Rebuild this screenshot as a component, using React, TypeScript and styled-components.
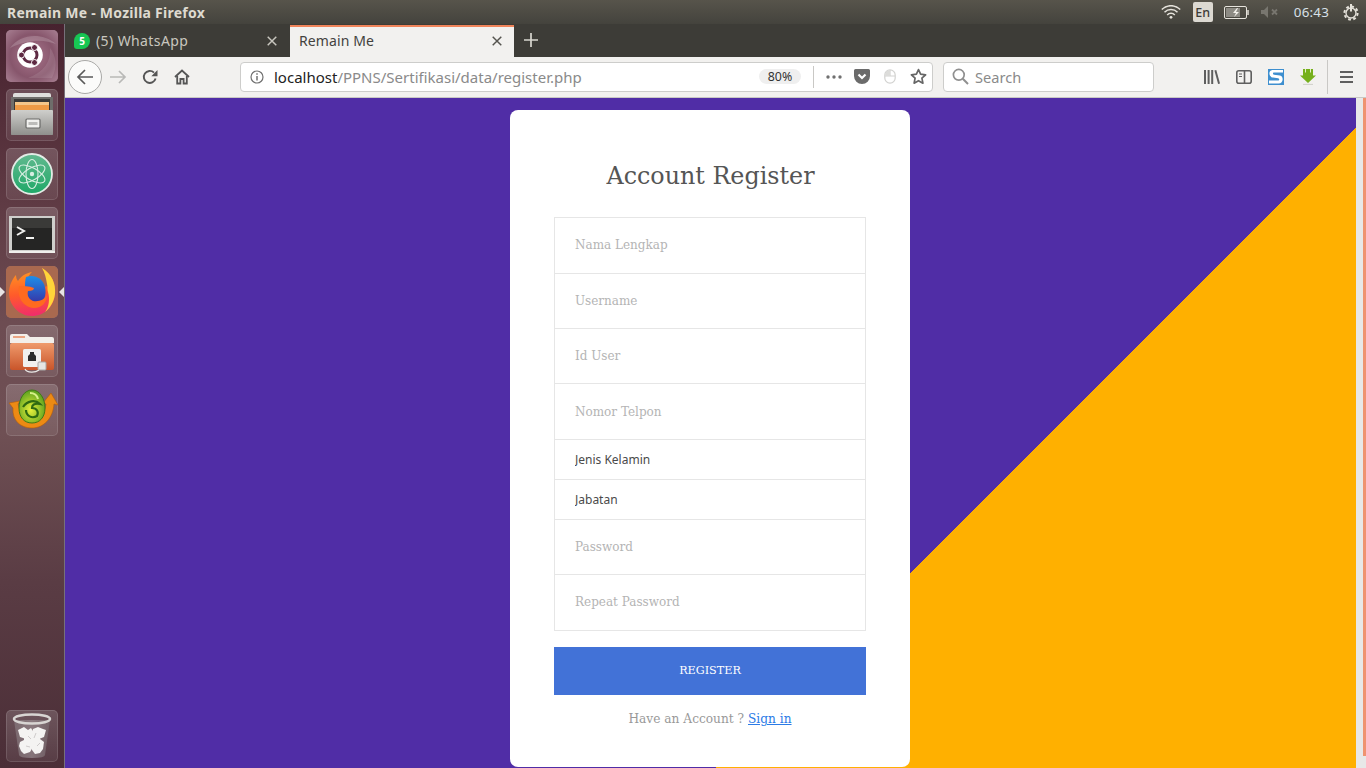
import React from "react";
import styled, { createGlobalStyle } from "styled-components";

const Global = createGlobalStyle`
  html, body { margin: 0; padding: 0; height: 100%; overflow: hidden; }
  * { box-sizing: border-box; }
`;

const UI = `"Noto Sans", "Open Sans", sans-serif`;
const SERIF = `"DejaVu Serif", serif`;

const Screen = styled.div`
  width: 1366px; height: 768px; display: flex; flex-direction: column; overflow: hidden; font-family: ${UI};
`;
const TopBar = styled.header`
  height: 24px; flex: none; display: flex; align-items: center; padding: 0 6px 0 7px;
  background: linear-gradient(#57544b, #44433d);
`;
const WinTitle = styled.div`
  flex: 1; font-size: 14px; font-weight: 700; color: #dedad0; white-space: nowrap; letter-spacing: .25px;
`;
const Tray = styled.div`display: flex; align-items: center;`;
const LangBadge = styled.div`
  width: 20px; height: 20px; margin: 0 11px 0 12px; border-radius: 2px; background: #dcd9d2; color: #3c3b37;
  font-size: 12.5px; font-weight: 500; display: flex; align-items: center; justify-content: center;
`;
const MuteSlot = styled.div`margin-left: 12px; display: flex;`;
const Clock = styled.div`
  margin: 0 13px 0 15px; font-size: 13.4px; color: #d8e0e8; letter-spacing: .2px;
`;
const Desktop = styled.div`flex: 1; min-height: 0; display: flex;`;
const Launcher = styled.nav`
  width: 65px; flex: none; display: flex; flex-direction: column; gap: 7px; padding: 6px;
  border-right: 1px solid #77707a;
  background: linear-gradient(#47222f 0%, #5b3640 20%, #6d4c52 40%, #6f5054 55%, #5a3c44 75%, #4b2e37 100%);
`;
const Tile = styled.div<{ $end?: boolean }>`
  position: relative; width: 52px; height: 52px; flex: none; border-radius: 5px;
  background: linear-gradient(rgba(255,255,255,.17), rgba(255,255,255,.07));
  box-shadow: inset 0 0 0 1px rgba(255,255,255,.13);
  margin-top: ${(p) => (p.$end ? "auto" : "0")};
  svg { display: block; }
`;
const PipLeft = styled.span`
  position: absolute; left: -6px; top: 21px; width: 0; height: 0;
  border: 5px solid transparent; border-left: 5px solid #e8e4e4; border-right: 0;
`;
const PipRight = styled.span`
  position: absolute; right: -6px; top: 21px; width: 0; height: 0;
  border: 5px solid transparent; border-right: 5px solid #e8e4e4; border-left: 0;
`;
const Browser = styled.main`flex: 1; min-width: 0; display: flex; flex-direction: column;`;
const TabStrip = styled.div`height: 33px; flex: none; display: flex; background: #3d3c37;`;
const Tab = styled.div<{ $active?: boolean; $w: number; $pr: number }>`
  width: ${(p) => p.$w}px; display: flex; align-items: center; padding: 0 ${(p) => p.$pr}px 3px 9px; gap: 6px;
  font-size: 14px; margin-top: 1px;
  color: ${(p) => (p.$active ? "#43423e" : "#c9c7bf")};
  background: ${(p) => (p.$active ? "#f2f1ef" : "transparent")};
  border-top: 2px solid ${(p) => (p.$active ? "#f0845a" : "transparent")};
`;
const TabLabel = styled.span<{ $spread?: number }>`
  flex: 1; white-space: nowrap; letter-spacing: ${(p) => p.$spread ?? 0}px;
`;
const Bubble = styled.span`
  width: 16px; height: 16px; flex: none; border-radius: 50% 50% 50% 3px; background: #17c653; color: #fff;
  font-size: 10px; font-weight: 700; display: flex; align-items: center; justify-content: center;
`;
const NewTab = styled.div`width: 34px; display: flex; align-items: center; justify-content: center; padding-bottom: 2px;`;
const Toolbar = styled.div`
  height: 41px; flex: none; display: flex; align-items: center; padding-left: 3px; padding-bottom: 1px;
  background: #f2f1ef; border-bottom: 1px solid #c9c8c5;
`;
const BackBtn = styled.div`
  width: 34px; height: 34px; flex: none; border-radius: 50%; border: 1px solid #a9a9a7; background: #fbfbfa;
  display: flex; align-items: center; justify-content: center;
`;
const ToolBtn = styled.div`
  width: 32px; height: 32px; flex: none; display: flex; align-items: center; justify-content: center;
`;
const UrlBar = styled.div`
  width: 693px; height: 30px; margin-left: 42px; flex: none; display: flex; align-items: center; padding-left: 9px;
  background: #fff; border: 1px solid #cdcdcb; border-radius: 4px;
`;
const UrlText = styled.div`
  flex: 1; margin-left: 10px; font-size: 15px; white-space: nowrap; color: #8a8a8a;
  b { font-weight: 400; color: #222; }
`;
const ZoomPill = styled.div`
  width: 42px; height: 15px; border-radius: 8px; background: #efefef; color: #333; font-size: 12.4px;
  display: flex; align-items: center; justify-content: center;
`;
const VSep = styled.div<{ $h: number; $mx: string }>`
  width: 1px; height: ${(p) => p.$h}px; margin: ${(p) => p.$mx}; flex: none; background: #c9c8c5;
`;
const UrlIcon = styled.div`
  width: 28px; height: 28px; flex: none; display: flex; align-items: center; justify-content: center;
`;
const SearchBar = styled.div`
  width: 211px; height: 30px; margin: 0 42px 0 10px; flex: none; display: flex; align-items: center; gap: 6px; padding-left: 8px;
  background: #fff; border: 1px solid #cdcdcb; border-radius: 4px; color: #8a8a8a; font-size: 14.6px;
`;
const Viewport = styled.div`flex: 1; min-height: 0; display: flex;`;
const Page = styled.div`
  flex: 1; min-width: 0; padding: 12px 0 0 445px; overflow: hidden;
  background: linear-gradient(135deg, #502da6 934px, #ffb000 934px);
`;
const ScrollTrack = styled.div`width: 10px; flex: none; background: #e8e8e8; display: flex; justify-content: flex-end;`;
const ScrollThumb = styled.div`width: 3px; height: 658px; background: #ef9370;`;
const Card = styled.form`
  width: 400px; height: 657px; background: #fff; border-radius: 8px; padding: 0 44px; font-family: ${SERIF};
`;
const Heading = styled.h1`
  margin: 0; height: 107px; padding: 48px 0 0 1px; text-align: center; font-size: 23.8px; line-height: 36px; font-weight: 400; color: #555;
`;
const Fields = styled.div`border: 1px solid #e6e6e6; border-top: 0; margin-bottom: 16px;`;
const FieldRow = styled.div<{ $h: number }>`
  height: ${(p) => p.$h}px; border-top: 1px solid #e6e6e6; display: flex;
`;
const TextField = styled.input<{ $lift?: number }>`
  flex: 1; min-width: 0; border: 0; outline: 0; background: transparent; padding: 0 20px ${(p) => p.$lift ?? 0}px; margin: 0;
  font: 400 12px ${SERIF}; color: #444;
  &::placeholder { color: #b4b4b4; opacity: 1; }
`;
const SelectField = styled.select`
  flex: 1; min-width: 0; border: 0; outline: 0; background: transparent; padding: 0 20px; margin: 0;
  appearance: none; font: 400 12px ${UI}; color: #4a4a4a;
`;
const Submit = styled.button`
  display: block; width: 100%; height: 48px; border: 0; padding: 0 0 2px; background: #4272d7; color: #fff;
  font: 400 11.2px ${SERIF};
`;
const Foot = styled.p`
  margin: 16px 0 0; text-align: center; font-size: 12.2px; line-height: 16px; color: #999;
  a { color: #2b7be6; text-decoration: underline; }
`;

const Tx = ({ size = 14, c = "#c9c7bf" }: { size?: number; c?: string }) => (
  <svg width={size} height={size} viewBox="0 0 14 14" fill="none" stroke={c} strokeWidth="1.7">
    <path d="M2 2l10 10M12 2L2 12" />
  </svg>
);

const UbuntuIcon = () => (
  <svg width="52" height="52" viewBox="0 0 52 52">
    <defs>
      <radialGradient id="ub" cx=".5" cy=".5" r=".7">
        <stop offset="0" stopColor="#a9758c" />
        <stop offset=".6" stopColor="#87566c" />
        <stop offset="1" stopColor="#a87f92" />
      </radialGradient>
    </defs>
    <rect width="52" height="52" rx="5" fill="url(#ub)" />
    <path d="M4 18C14 4 36 2 50 14c-12-5-28-5-46 4z" fill="#fff" opacity=".18" />
    <path d="M46 48C52 36 50 26 44 18c1 14-6 24-22 30z" fill="#fff" opacity=".1" />
    <circle cx="24" cy="25" r="12.8" fill="#fff" />
    <circle cx="24" cy="25" r="7" fill="none" stroke="#5e2a43" strokeWidth="3" />
    <circle cx="15.5" cy="25" r="3" fill="#5e2a43" stroke="#fff" strokeWidth="1" />
    <circle cx="28.5" cy="17.5" r="3" fill="#5e2a43" stroke="#fff" strokeWidth="1" />
    <circle cx="28.5" cy="32.5" r="3" fill="#5e2a43" stroke="#fff" strokeWidth="1" />
  </svg>
);
const FilesIcon = () => (
  <svg width="52" height="52" viewBox="0 0 52 52">
    <defs>
      <linearGradient id="cab" x1="0" y1="0" x2="0" y2="1">
        <stop offset="0" stopColor="#cfcfcc" />
        <stop offset="1" stopColor="#8f8f8c" />
      </linearGradient>
    </defs>
    <path d="M7 6q0-2 2-2h34q2 0 2 2v2H7z" fill="#dededc" />
    <rect x="5" y="8" width="42" height="38" fill="#6e6d6a" />
    <rect x="8" y="10" width="36" height="13" fill="#3a3937" />
    <rect x="9" y="13" width="34" height="3" fill="#f4c68a" />
    <rect x="9" y="16" width="34" height="7" fill="#ee9a45" />
    <rect x="5" y="21" width="42" height="25" rx="1" fill="url(#cab)" />
    <rect x="20" y="30" width="14" height="9" rx="1" fill="#f1f1ef" stroke="#6a6a68" strokeWidth="1.2" />
    <rect x="22.5" y="33" width="9" height="3" fill="#bcbcba" />
  </svg>
);
const AtomIcon = () => (
  <svg width="52" height="52" viewBox="0 0 52 52">
    <defs>
      <linearGradient id="at" x1="0" y1="0" x2="0" y2="1">
        <stop offset="0" stopColor="#62b98f" />
        <stop offset="1" stopColor="#1fa868" />
      </linearGradient>
    </defs>
    <circle cx="26" cy="26" r="20" fill="url(#at)" stroke="#e3ece6" strokeWidth="1.8" />
    <g fill="none" stroke="#d8eee2" strokeWidth="1.1">
      <ellipse cx="26" cy="26" rx="14.5" ry="6" transform="rotate(30 26 26)" />
      <ellipse cx="26" cy="26" rx="14.5" ry="6" transform="rotate(90 26 26)" />
      <ellipse cx="26" cy="26" rx="14.5" ry="6" transform="rotate(150 26 26)" />
    </g>
    <circle cx="26" cy="26" r="2.2" fill="#d8eee2" />
  </svg>
);
const TermIcon = () => (
  <svg width="52" height="52" viewBox="0 0 52 52">
    <rect x="3" y="9" width="46" height="37" fill="#cfcfcc" />
    <rect x="3" y="44" width="46" height="2" fill="#efefec" />
    <rect x="6" y="11" width="40" height="32" fill="#252524" />
    <rect x="6" y="11" width="40" height="10" fill="#3a3a38" />
    <path d="M11 20l7 4-7 4" fill="none" stroke="#f2f2f0" strokeWidth="2" />
    <path d="M20 31h8" stroke="#f2f2f0" strokeWidth="2" />
  </svg>
);
const FirefoxIcon = () => (
  <svg width="52" height="52" viewBox="0 0 52 52">
    <defs>
      <linearGradient id="ff" x1=".3" y1="0" x2=".4" y2="1">
        <stop offset="0" stopColor="#ff9a1f" />
        <stop offset=".55" stopColor="#ff5a2b" />
        <stop offset="1" stopColor="#ef2d6b" />
      </linearGradient>
      <linearGradient id="gl" x1=".5" y1="0" x2=".5" y2="1">
        <stop offset="0" stopColor="#1c8fea" />
        <stop offset="1" stopColor="#3a2a9f" />
      </linearGradient>
    </defs>
    <rect width="52" height="52" rx="5" fill="#a9694f" />
    <path d="M36 2c10 6 14 16 13 26-1 13-11 22-23 22C13 50 3 39 3 27 3 19 7 12 10 9c0 3 1 5 2 6 3-5 8-8 14-9-3 3-4 5-4 7 6-1 12 2 14 6 1 2 4 2 5 1 1-7-1-13-5-18z" fill="url(#ff)" />
    <path d="M36 2c10 6 14 16 13 26-1 8-5 14-10 18 4-5 5-13 3-20-1-4 0-5-1-8-1-6-2-11-5-16z" fill="#ffd53a" />
    <path d="M20 11c8-3 17 1 19 10 2 8-1 17-10 19-6-4-10-12-10-18 0-4 0-8 1-11z" fill="url(#gl)" />
    <path d="M13 20c-2 10 3 21 15 22 8 0 13-6 13-13-3 5-8 7-14 6-5-2-6-7-5-10 4 0 6-1 6-3-5-2-11-2-15-2z" fill="#ff6a1f" />
  </svg>
);
const FolderIcon = () => (
  <svg width="52" height="52" viewBox="0 0 52 52">
    <defs>
      <linearGradient id="fo" x1="0" y1="0" x2="0" y2="1">
        <stop offset="0" stopColor="#ef9a6c" />
        <stop offset="1" stopColor="#c9552a" />
      </linearGradient>
    </defs>
    <path d="M4 11q0-2 2-2h15l3 3h22q2 0 2 2v4H4z" fill="#f3efea" />
    <rect x="7" y="11" width="12" height="2" fill="#eba583" />
    <rect x="4" y="18" width="44" height="27" rx="2" fill="url(#fo)" />
    <rect x="17" y="24" width="18" height="18" rx="1.5" fill="#f1f0ee" />
    <path d="M22 36v-5l2-2v-2h4v2l2 2v5z" fill="#2b2b2b" />
    <rect x="32" y="37" width="8" height="8" rx="1" fill="#e6e6e4" stroke="#a9a9a7" />
    <path d="M33 45c-4 3-12 3-14-1" fill="none" stroke="#e8e8e6" strokeWidth="1.2" />
  </svg>
);
const BackupIcon = () => (
  <svg width="52" height="52" viewBox="0 0 52 52">
    <defs>
      <radialGradient id="egg" cx=".45" cy=".6" r=".65">
        <stop offset="0" stopColor="#e8f03c" />
        <stop offset="1" stopColor="#4f9a1c" />
      </radialGradient>
    </defs>
    <path d="M3 19l11-2-2 3c2 10 8 15 14 15s13-5 14-15l-3-1 8-10 7 12-4-1c-1 14-10 24-22 24S6 36 7 24z" fill="#ec8a14" stroke="#b45d0a" strokeWidth=".6" />
    <path d="M26 6c8 0 13 9 13 18s-5 15-13 15-13-6-13-15S18 6 26 6z" fill="url(#egg)" stroke="#3f7a16" />
    <path d="M17 23c4-6 12-8 17-3-6-1-8 1-8 4 5 0 7 4 5 8-5 3-11 0-11-6" fill="none" stroke="#2f6a12" strokeWidth="2.2" />
    <path d="M24 9c4 0 7 2 8 6" fill="none" stroke="#d7f08a" strokeWidth="2" />
  </svg>
);
const TrashIcon = () => (
  <svg width="52" height="52" viewBox="0 0 52 52">
    <defs>
      <linearGradient id="bin" x1="0" y1="0" x2="1" y2="0">
        <stop offset="0" stopColor="#8d8286" />
        <stop offset=".5" stopColor="#a89ea2" />
        <stop offset="1" stopColor="#7d7276" />
      </linearGradient>
    </defs>
    <path d="M8 10l5 35q0 3 13 3t13-3l5-35z" fill="url(#bin)" opacity=".55" />
    <ellipse cx="26" cy="9" rx="18" ry="4.5" fill="none" stroke="#d8d5d3" strokeWidth="2.5" />
    <g fill="#f4f3f2">
      <path d="M12 20l6-3 4 3 3-2 3 5-2 5-6 1-6-2z" />
      <path d="M27 19l5-2 5 2 3 1-2 7-5 2-5-2-2-4z" />
      <path d="M14 32l6-3 5 3 2 5-3 5-6 2-3-3-2-5z" />
      <path d="M28 31l6-2 4 3-1 7-3 4-5 1-3-4 0-5z" />
      <rect x="18" y="24" width="16" height="12" />
    </g>
    <path d="M22 26l3 3M30 23l-2 5M20 36l4 1M31 36l3-3" stroke="#c4c0c0" fill="none" strokeWidth=".8" />
  </svg>
);

const I = {
  back: (
    <svg width="20" height="20" viewBox="0 0 20 20" fill="none" stroke="#5a5a5a" strokeWidth="1.7"><path d="M18 10H3M10 3l-7 7 7 7" /></svg>
  ),
  fwd: (
    <svg width="18" height="18" viewBox="0 0 18 18" fill="none" stroke="#b9b9b7" strokeWidth="1.7"><path d="M1 9h15M10 3l6 6-6 6" /></svg>
  ),
  reload: (
    <svg width="16" height="16" viewBox="0 0 16 16" fill="none"><path d="M13.6 9.5A6 6 0 1 1 12 3.6" stroke="#555" strokeWidth="1.9" /><path d="M15.5 1v6.2H9.3z" fill="#555" /></svg>
  ),
  home: (
    <svg width="16" height="16" viewBox="0 0 16 16" fill="none" stroke="#555" strokeWidth="1.8"><path d="M1 8l7-6.5L15 8" /><path d="M3.2 7v7.5h3.2V10h3.2v4.5h3.2V7" /></svg>
  ),
  info: (
    <svg width="14" height="14" viewBox="0 0 14 14" fill="none" stroke="#707070" strokeWidth="1.2"><circle cx="7" cy="7" r="6" /><path d="M7 6v4.5" strokeWidth="1.5" /><path d="M7 3.2v1.5" strokeWidth="1.5" /></svg>
  ),
  dots: (
    <svg width="16" height="4" viewBox="0 0 16 4" fill="#707070"><circle cx="2" cy="2" r="1.7" /><circle cx="8" cy="2" r="1.7" /><circle cx="14" cy="2" r="1.7" /></svg>
  ),
  pocket: (
    <svg width="16" height="15" viewBox="0 0 16 15"><path d="M1.5 0h13A1.5 1.5 0 0 1 16 1.5V7a8 8 0 0 1-16 0V1.5A1.5 1.5 0 0 1 1.5 0z" fill="#6b6b6b" /><path d="M4.5 5.5L8 9l3.5-3.5" fill="none" stroke="#fff" strokeWidth="2.2" /></svg>
  ),
  mouse: (
    <svg width="12" height="15" viewBox="0 0 12 15" fill="none" stroke="#d2d2d0" strokeWidth="1.2"><rect x=".8" y=".8" width="10.4" height="13.4" rx="5.2" /><path d="M6 1v6M1 7h10" /><path d="M6 1a5 5 0 0 0-5 5v1h5z" fill="#dcdcda" stroke="none" /></svg>
  ),
  star: (
    <svg width="17" height="17" viewBox="0 0 17 17" fill="none" stroke="#666" strokeWidth="1.7" strokeLinejoin="round"><path d="M8.5 1.6l2.1 4.6 5 .6-3.7 3.4 1 5-4.4-2.5-4.4 2.5 1-5L1.4 6.8l5-.6z" /></svg>
  ),
  search: (
    <svg width="17" height="17" viewBox="0 0 17 17" fill="none" stroke="#8f8f8f" strokeWidth="1.7"><circle cx="6.8" cy="6.8" r="5.4" /><path d="M10.8 10.8l5.2 5.2" strokeWidth="2" /></svg>
  ),
  library: (
    <svg width="16" height="15" viewBox="0 0 16 15" fill="#5f5f5f"><rect x="0" y="1" width="2" height="14" /><rect x="3.6" y="1" width="2" height="14" /><rect x="7.2" y="1" width="2" height="14" /><path d="M10.4 1.6l1.9-.6 3.7 13.4-1.9.6z" /></svg>
  ),
  sidebar: (
    <svg width="16" height="14" viewBox="0 0 16 14" fill="none" stroke="#5f5f5f" strokeWidth="1.6"><rect x=".8" y=".8" width="14.4" height="12.4" rx="2" /><path d="M8.5 1v12" /><path d="M3 4h3M3 6.5h3" strokeWidth="1.1" /></svg>
  ),
  s: (
    <svg width="16" height="16" viewBox="0 0 16 16"><rect width="16" height="16" fill="#3e8fcf" /><path d="M1 1h14v2.5H6c-1.4 0-1.4 2 0 2.2l6 .9c4 .7 3.5 8-1.5 8H1v-3h9c1.6 0 1.6-2 .2-2.3L5 8.6C0 7.6.4 1 5 1z" fill="#fff" /></svg>
  ),
  download: (
    <svg width="16" height="16" viewBox="0 0 16 16"><path d="M3 0h10v6.5h3L8 14 0 6.500h3z" fill="#76b01c" /><path d="M5.500 0v3.500M10.500 0v3.500" stroke="#e4efc8" strokeWidth="1" /><path d="M3 15.400h10" stroke="#cfcfc9" strokeWidth="1" /></svg>
  ),
  burger: (
    <svg width="14" height="12" viewBox="0 0 14 12" fill="#5f5f5f"><rect width="13" height="2" /><rect y="5" width="13" height="2" /><rect y="10" width="13" height="2" /></svg>
  ),
  plus: (
    <svg width="14" height="14" viewBox="0 0 14 14" stroke="#d8d6cf" strokeWidth="1.7"><path d="M7 0v14M0 7h14" /></svg>
  ),
  wifi: (
    <svg width="20" height="14" viewBox="0 0 20 14" fill="none" stroke="#e6e3dc" strokeWidth="1.5"><path d="M.8 4.5a13 13 0 0 1 18.400 0M3.500 7.300a9.200 9.200 0 0 1 13 0M6.200 10a5.200 5.200 0 0 1 7.600 0" /><circle cx="10" cy="12.300" r="1.400" fill="#e6e3dc" stroke="none" /></svg>
  ),
  battery: (
    <svg width="25" height="13" viewBox="0 0 25 13"><rect x=".5" y=".5" width="22" height="12" rx="1.500" fill="none" stroke="#e6e3dc" /><rect x="2" y="2" width="14" height="9" fill="#8d8b84" /><rect x="23" y="4" width="2" height="5" fill="#bdbab2" /><path d="M13 2l-4 5h3l-2 4 5-5h-3l2-4z" fill="#f2f0ea" /></svg>
  ),
  mute: (
    <svg width="18" height="12" viewBox="0 0 18 12"><path d="M0 4h3l4-4v12L3 8H0z" fill="#78766f" /><path d="M11 3.500l5 5M16 3.500l-5 5" stroke="#78766f" strokeWidth="1.800" /></svg>
  ),
  power: (
    <svg width="18" height="18" viewBox="0 0 18 18" fill="none" stroke="#e4e1d9"><circle cx="9" cy="10" r="6.600" strokeWidth="2" strokeDasharray="2.800 2.380" /><circle cx="9" cy="10" r="5" strokeWidth="1.400" /><path d="M9 1v7.500" strokeWidth="2" /></svg>
  ),
};

export default function App() {
  return (
    <>
      <Global />
      <Screen>
        <TopBar>
          <WinTitle>Remain Me - Mozilla Firefox</WinTitle>
          <Tray>
            {I.wifi}
            <LangBadge>En</LangBadge>
            {I.battery}
            <MuteSlot>{I.mute}</MuteSlot>
            <Clock>06:43</Clock>
            {I.power}
          </Tray>
        </TopBar>
        <Desktop>
          <Launcher>
            <Tile><UbuntuIcon /></Tile>
            <Tile><FilesIcon /></Tile>
            <Tile><AtomIcon /></Tile>
            <Tile><TermIcon /></Tile>
            <Tile><FirefoxIcon /><PipLeft /><PipRight /></Tile>
            <Tile><FolderIcon /></Tile>
            <Tile><BackupIcon /></Tile>
            <Tile $end><TrashIcon /></Tile>
          </Launcher>
          <Browser>
            <TabStrip>
              <Tab $w={225} $pr={12}>
                <Bubble>5</Bubble>
                <TabLabel $spread={0.4}>(5) WhatsApp</TabLabel>
                <Tx size={12} />
              </Tab>
              <Tab $w={224} $pr={11} $active>
                <TabLabel $spread={0.1}>Remain Me</TabLabel>
                <Tx size={12} c="#55544f" />
              </Tab>
              <NewTab>{I.plus}</NewTab>
            </TabStrip>
            <Toolbar>
              <BackBtn>{I.back}</BackBtn>
              <ToolBtn>{I.fwd}</ToolBtn>
              <ToolBtn>{I.reload}</ToolBtn>
              <ToolBtn>{I.home}</ToolBtn>
              <UrlBar>
                {I.info}
                <UrlText><b>localhost</b>/PPNS/Sertifikasi/data/register.php</UrlText>
                <ZoomPill>80%</ZoomPill>
                <VSep $h={22} $mx="0 6px 0 12px" />
                <UrlIcon>{I.dots}</UrlIcon>
                <UrlIcon>{I.pocket}</UrlIcon>
                <UrlIcon>{I.mouse}</UrlIcon>
                <UrlIcon>{I.star}</UrlIcon>
              </UrlBar>
              <SearchBar>{I.search}<span>Search</span></SearchBar>
              <ToolBtn>{I.library}</ToolBtn>
              <ToolBtn>{I.sidebar}</ToolBtn>
              <ToolBtn>{I.s}</ToolBtn>
              <ToolBtn>{I.download}</ToolBtn>
              <VSep $h={34} $mx="0 3px" />
              <ToolBtn>{I.burger}</ToolBtn>
            </Toolbar>
            <Viewport>
              <Page>
                <Card onSubmit={(e) => e.preventDefault()}>
                  <Heading>Account Register</Heading>
                  <Fields>
                    <FieldRow $h={56}><TextField $lift={2} placeholder="Nama Lengkap" /></FieldRow>
                    <FieldRow $h={55}><TextField placeholder="Username" /></FieldRow>
                    <FieldRow $h={55}><TextField placeholder="Id User" /></FieldRow>
                    <FieldRow $h={56}><TextField placeholder="Nomor Telpon" /></FieldRow>
                    <FieldRow $h={40}><SelectField><option>Jenis Kelamin</option></SelectField></FieldRow>
                    <FieldRow $h={40}><SelectField><option>Jabatan</option></SelectField></FieldRow>
                    <FieldRow $h={55}><TextField type="password" placeholder="Password" /></FieldRow>
                    <FieldRow $h={56}><TextField $lift={2} type="password" placeholder="Repeat Password" /></FieldRow>
                  </Fields>
                  <Submit type="submit">REGISTER</Submit>
                  <Foot>Have an Account ? <a href="#signin">Sign in</a></Foot>
                </Card>
              </Page>
              <ScrollTrack><ScrollThumb /></ScrollTrack>
            </Viewport>
          </Browser>
        </Desktop>
      </Screen>
    </>
  );
}
